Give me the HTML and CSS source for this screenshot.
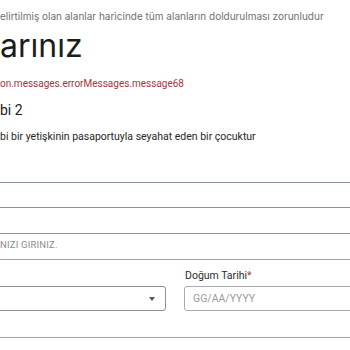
FILE: index.html
```html
<!DOCTYPE html>
<html lang="tr">
<head>
	<meta charset="utf-8">
	<title>Yolcu bilgileri</title>
	<link rel="stylesheet" href="styles.css">
</head>
<body>
	<div class="page">
		<p class="note">elirtilmiş olan alanlar haricinde tüm alanların doldurulması zorunludur</p>
		<h1 class="title">arınız</h1>
		<p class="error">on.messages.errorMessages.message68</p>
		<h2 class="subtitle">bi 2</h2>
		<p class="desc">bi bir yetişkinin pasaportuyla seyahat eden bir çocuktur</p>

		<div class="stack">
			<input class="line-input" type="text">
			<input class="line-input" type="text">
		</div>
		<p class="hint">NIZI GIRINIZ.</p>
		<div class="rule"></div>

		<div class="row">
			<div class="cell cell-select">
				<div class="select">
					<span class="caret"></span>
				</div>
			</div>
			<div class="cell cell-date">
				<label class="label">Doğum Tarihi<span class="req">*</span></label>
				<input class="date" type="text" placeholder="GG/AA/YYYY">
			</div>
		</div>
		<div class="rule rule-bottom"></div>
	</div>
</body>
</html>
```

FILE: styles.css
```css
body {
	margin: 0;
	width: 350px;
	height: 350px;
	overflow: hidden;
	background: #fff;
	font-family: Roboto, "Liberation Sans", sans-serif;
	color: #222;
}

.page {
	width: 350px;
	height: 350px;
	overflow: hidden;
	display: flex;
	flex-direction: column;
}

p,
h1,
h2 {
	margin: 0;
}

.note {
	margin-top: 9px;
	font-family: Inter, "Noto Sans", sans-serif;
	font-size: 10px;
	line-height: 14px;
	color: #6f6f6f;
	white-space: nowrap;
}

.title {
	margin-top: 5px;
	font-family: Inter, "Noto Sans", sans-serif;
	font-size: 32px;
	line-height: 36px;
	font-weight: 400;
	color: #1c1c1c;
}

.error {
	margin-top: 13px;
	font-size: 10px;
	line-height: 14px;
	color: #a83341;
	white-space: nowrap;
}

.subtitle {
	margin-top: 10px;
	font-size: 14px;
	line-height: 18px;
	font-weight: 400;
	color: #222;
}

.desc {
	margin-top: 11px;
	font-size: 10.5px;
	line-height: 14px;
	color: #262626;
	white-space: nowrap;
}

.stack {
	margin-top: 38px;
	margin-left: -10px;
	width: 400px;
	display: flex;
	flex-direction: column;
	flex-shrink: 0;
}

.line-input {
	box-sizing: border-box;
	height: 26px;
	border: 1px solid #8796a2;
	margin: 0;
	padding: 0;
	background: transparent;
}

.line-input + .line-input {
	border-top: 0;
}

.hint {
	margin-top: 5px;
	font-size: 9.5px;
	line-height: 12px;
	letter-spacing: 0.2px;
	color: #8d8d8d;
}

.rule {
	margin-top: 8px;
	border-top: 1px solid #9aa6ae;
}

.row {
	display: flex;
	gap: 18px;
	margin-top: 9px;
}

.cell {
	display: flex;
	flex-direction: column;
	flex-shrink: 0;
}

.cell-select {
	justify-content: flex-end;
	margin-left: -10px;
	width: 176px;
}

.select {
	box-sizing: border-box;
	height: 25px;
	border: 1px solid #8a9096;
	border-radius: 3px;
	display: flex;
	align-items: center;
	justify-content: flex-end;
	padding-right: 10px;
}

.caret {
	width: 0;
	height: 0;
	border-left: 3.5px solid transparent;
	border-right: 3.5px solid transparent;
	border-top: 4px solid #555;
}

.label {
	font-size: 10.5px;
	line-height: 13px;
	color: #2b2b2b;
	margin-bottom: 4px;
	margin-left: 1px;
}

.req {
	color: #b0283a;
}

.date {
	box-sizing: border-box;
	width: 200px;
	height: 25px;
	border: 1px solid #a9adb1;
	border-radius: 3px;
	padding: 0 8px;
	font-family: Roboto, "Liberation Sans", sans-serif;
	font-size: 10.5px;
	color: #333;
}

.date::placeholder {
	color: #9a9a9a;
}

.rule-bottom {
	margin-top: 26px;
}
```
